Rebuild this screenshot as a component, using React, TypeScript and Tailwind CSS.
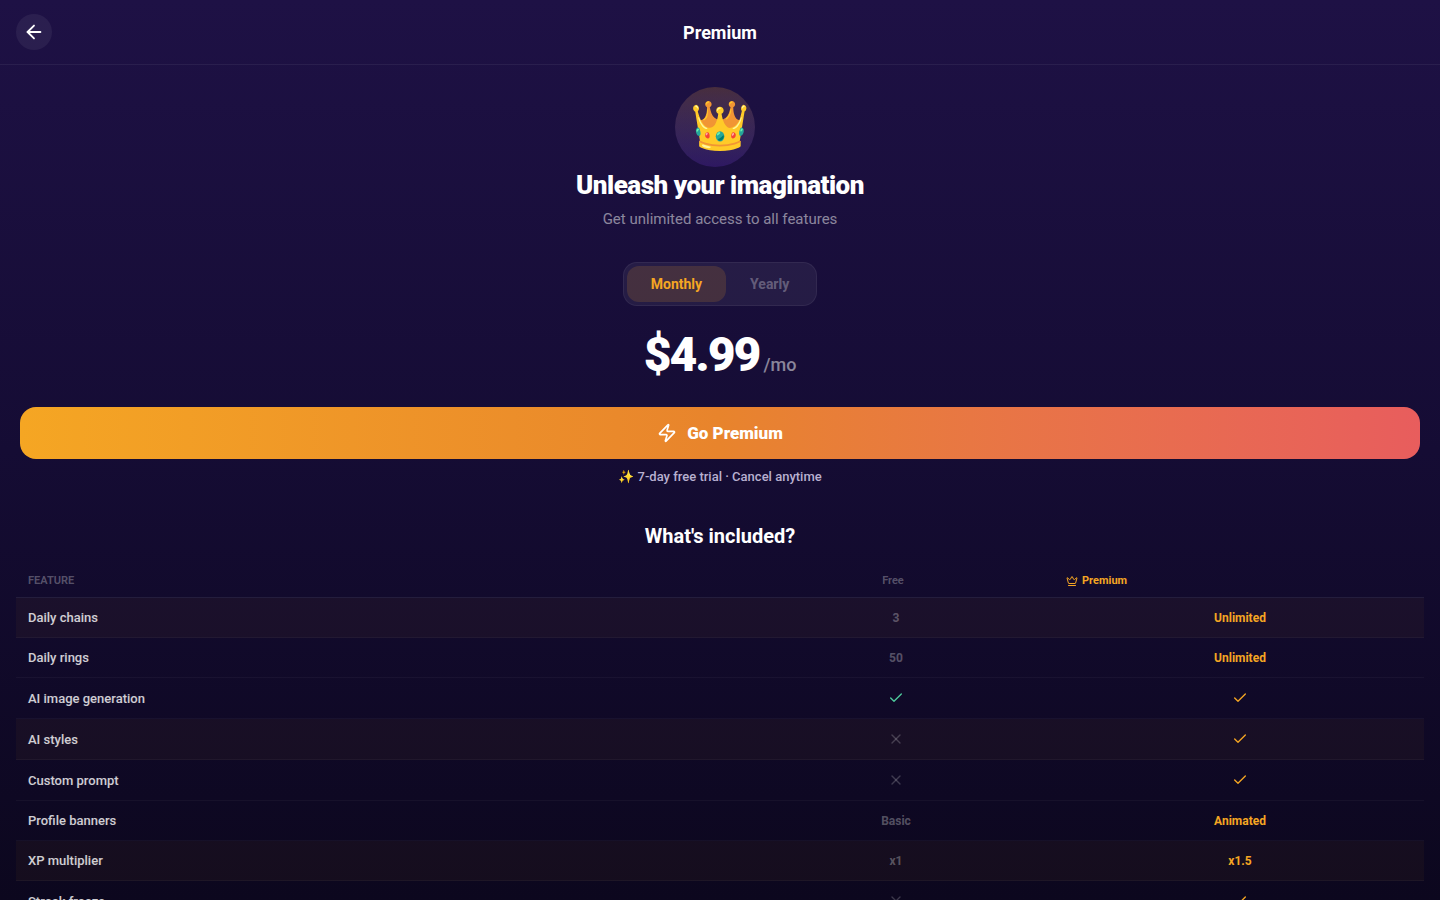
import { ArrowLeft, Check, Crown, X, Zap } from "lucide-react"
import { useState } from "react"

type Plan = "monthly" | "yearly"
type Value = string | boolean

interface Feature {
  name: string
  free: Value
  premium: Value
  highlight?: boolean
}

const plans: { id: Plan; label: string; price: string; unit: string }[] = [
  { id: "monthly", label: "Monthly", price: "$4.99", unit: "/mo" },
  { id: "yearly", label: "Yearly", price: "$39.99", unit: "/yr" },
]

const features: Feature[] = [
  { name: "Daily chains", free: "3", premium: "Unlimited", highlight: true },
  { name: "Daily rings", free: "50", premium: "Unlimited" },
  { name: "AI image generation", free: true, premium: true },
  { name: "AI styles", free: false, premium: true, highlight: true },
  { name: "Custom prompt", free: false, premium: true },
  { name: "Profile banners", free: "Basic", premium: "Animated" },
  { name: "XP multiplier", free: "x1", premium: "x1.5", highlight: true },
  { name: "Streak freeze", free: false, premium: true },
]

function FeatureValue({ value, premium = false }: { value: Value; premium?: boolean }) {
  if (value === true) {
    return (
      <Check
        size={16}
        aria-label="Included"
        className={premium ? "text-[#f5a623]" : "text-[#4ecb9c]"}
      />
    )
  }
  if (value === false) {
    return <X size={16} aria-label="Not included" className="text-white/20" />
  }
  return (
    <span
      className={
        premium
          ? "text-[12px] leading-[14px] font-bold text-[#f5a623]"
          : "text-[12px] leading-[14px] font-bold text-white/30"
      }
    >
      {value}
    </span>
  )
}

function PlanToggle({ plan, onChange }: { plan: Plan; onChange: (plan: Plan) => void }) {
  return (
    <div className="flex rounded-[14px] border border-white/6 bg-white/6 p-[3px]">
      {plans.map(p => (
        <button
          key={p.id}
          type="button"
          aria-pressed={p.id === plan}
          onClick={() => onChange(p.id)}
          className={
            p.id === plan
              ? "rounded-xl bg-[#f5a623]/15 px-6 py-[10px] text-sm leading-4 font-bold text-[#f5a623]"
              : "rounded-xl px-6 py-[10px] text-sm leading-4 font-bold text-white/30"
          }
        >
          {p.label}
        </button>
      ))}
    </div>
  )
}

function FeatureTable() {
  return (
    <table className="block w-full">
      <thead className="block">
        <tr className="flex border-b border-white/8 px-3 py-[10px] text-[11px] leading-[13px]">
          <th className="flex-[2] text-left font-semibold text-white/30 uppercase">Feature</th>
          <th className="flex-1 text-center font-semibold text-white/30">Free</th>
          <th className="flex flex-1 items-center gap-1 font-bold text-[#f5a623]">
            <Crown size={12} />
            Premium
          </th>
        </tr>
      </thead>
      <tbody className="block">
        {features.map(f => (
          <tr
            key={f.name}
            className={
              f.highlight
                ? "flex items-center border-b border-white/4 bg-[#f5a623]/4 px-3 py-3"
                : "flex items-center border-b border-white/4 px-3 py-3"
            }
          >
            <th className="flex-[2] pr-2 text-left text-[13px] leading-[15px] font-medium text-white/80">
              {f.name}
            </th>
            <td className="flex flex-1 justify-center">
              <FeatureValue value={f.free} />
            </td>
            <td className="flex flex-1 justify-center">
              <FeatureValue value={f.premium} premium />
            </td>
          </tr>
        ))}
      </tbody>
    </table>
  )
}

export default function App() {
  const [plan, setPlan] = useState<Plan>("monthly")
  const current = plans.find(p => p.id === plan) ?? plans[0]

  return (
    <div className="flex h-screen flex-col bg-linear-to-b from-[#1e1145] via-[#150c34] to-[#0c071e] font-[Roboto,sans-serif] text-white">
      <header className="flex items-center justify-between border-b border-white/6 px-4 py-[14px]">
        <button
          type="button"
          aria-label="Back"
          className="flex size-9 items-center justify-center rounded-full bg-white/6"
        >
          <ArrowLeft size={22} />
        </button>
        <h1 className="text-lg leading-[23px] font-bold">Premium</h1>
        <div className="size-9" />
      </header>

      <main className="min-h-0 flex-1 overflow-y-auto [scrollbar-width:none]">
        <section className="flex flex-col items-center px-5 pt-[22px]">
          <div className="mr-[10px] flex size-20 items-center justify-center rounded-full bg-linear-to-b from-[#f5a623]/20 to-[#7c3aed]/20 pb-[2px] pl-[10px]">
            <span className="text-[48px] leading-[54px]">👑</span>
          </div>
          <h2 className="mt-[3px] text-[26px] leading-[30px] font-black tracking-[-0.5px]">
            Unleash your imagination
          </h2>
          <p className="mt-[9px] text-[15px] leading-5 text-white/50">
            Get unlimited access to all features
          </p>
        </section>

        <section className="flex flex-col items-center px-5 pt-[33px]">
          <PlanToggle plan={plan} onChange={setPlan} />
          <p className="mt-[21px] flex items-baseline gap-1">
            <span className="text-[48px] leading-[56px] font-black tracking-[-2px]">
              {current.price}
            </span>
            <span className="text-lg font-medium text-white/50">{current.unit}</span>
          </p>
          <button
            type="button"
            className="mt-6 flex h-[52px] w-full items-center justify-center gap-[10px] rounded-2xl bg-linear-to-r from-[#f5a623] via-[#e8842c] to-[#e85d5d] text-[17px] leading-5 font-black"
          >
            <Zap size={20} />
            Go Premium
          </button>
          <p className="mt-[10px] text-[13px] leading-4 font-medium text-[#b8b0d0]">
            ✨ 7-day free trial · Cancel anytime
          </p>
        </section>

        <section className="px-4 pt-[39px] pb-10">
          <h2 className="mb-4 text-center text-xl leading-6 font-bold">What's included?</h2>
          <FeatureTable />
        </section>
      </main>
    </div>
  )
}
